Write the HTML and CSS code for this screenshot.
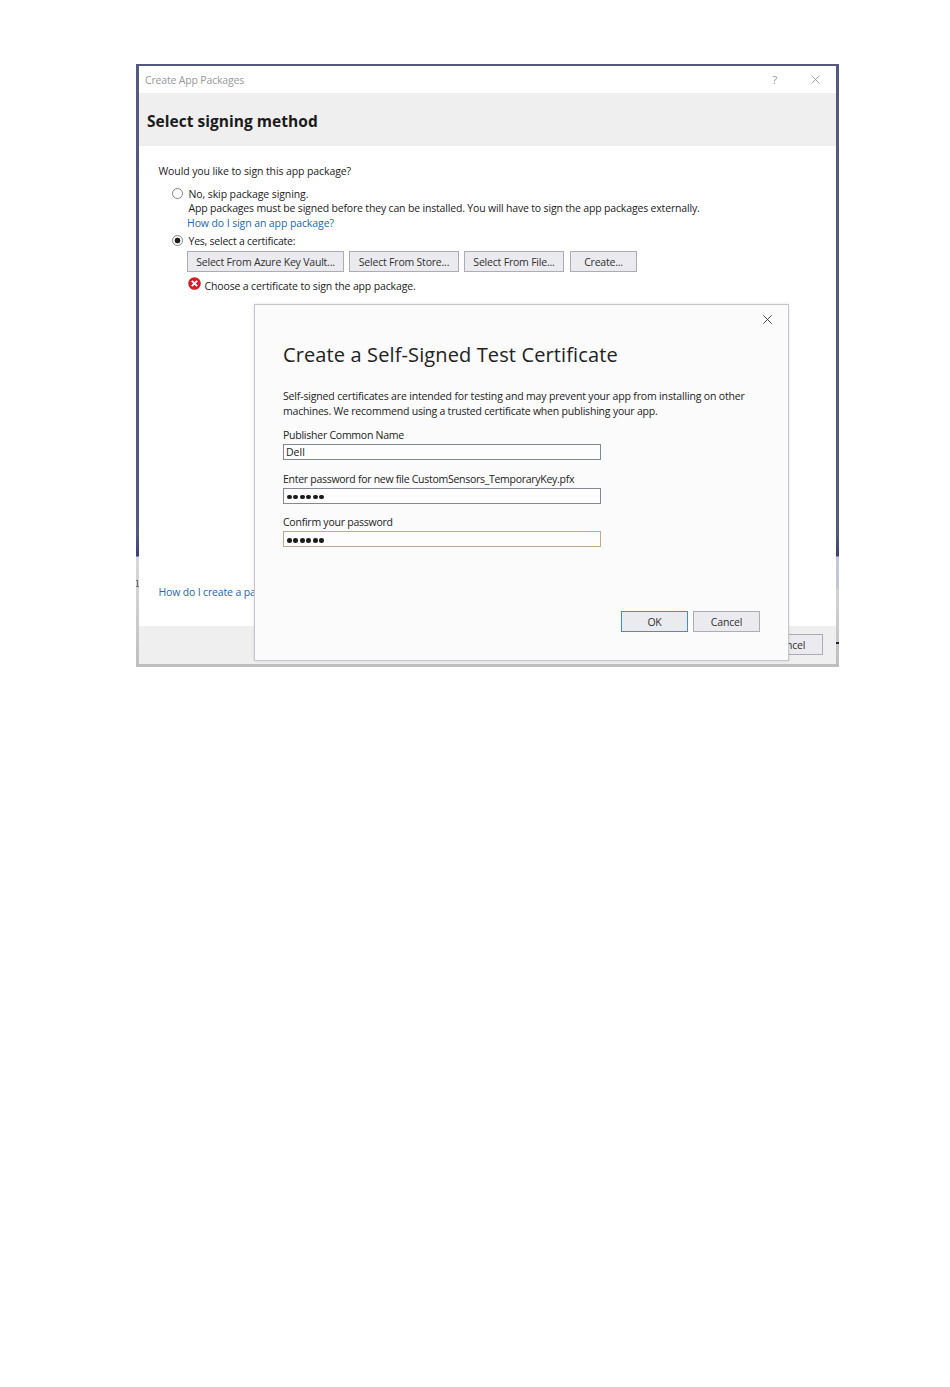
FILE: index.html
```
<!DOCTYPE html>
<html lang="en">
<head>
    <meta charset="UTF-8">
    <meta name="viewport" content="width=device-width, initial-scale=1.0">
    <title>Create App Packages</title>
    <link rel="stylesheet" href="styles.css">
</head>
<body>

    <!-- Strip of desktop visible around the window -->
    <div class="desktop">
        <div class="window">

            <div class="title-bar">
                <span class="title">Create App Packages</span>
                <span class="help">?</span>
                <svg class="close" width="9" height="9" viewBox="0 0 9 9"><path d="M0.5 0.5L8.5 8.5M8.5 0.5L0.5 8.5"/></svg>
            </div>

            <div class="header">
                <h2>Select signing method</h2>
            </div>

            <!-- Signing options -->
            <div class="content">
                <p class="question">Would you like to sign this app package?</p>

                <div class="option">
                    <span class="radio"></span>
                    <span class="skip">No, skip package signing.</span>
                </div>
                <p class="note">App packages must be signed before they can be installed. You will have to sign the app packages externally.</p>
                <a class="link sign-link">How do I sign an app package?</a>

                <div class="option option-yes">
                    <span class="radio checked"></span>
                    <span class="yes">Yes, select a certificate:</span>
                </div>

                <div class="buttons">
                    <button class="btn-vault">Select From Azure Key Vault...</button>
                    <button class="btn-store">Select From Store...</button>
                    <button class="btn-file">Select From File...</button>
                    <button class="btn-create">Create...</button>
                </div>

                <div class="error">
                    <svg width="13" height="13" viewBox="0 0 13 13">
                        <circle cx="6.5" cy="6.5" r="6.3"/>
                        <path d="M3.8 3.8L9.2 9.2M9.2 3.8L3.8 9.2"/>
                    </svg>
                    <span>Choose a certificate to sign the app package.</span>
                </div>

                <a class="link package-link">How do I create a package?</a>
            </div>

            <div class="footer">
                <button>Cancel</button>
            </div>
        </div>

        <!-- Certificate dialog -->
        <div class="dialog">
            <svg class="close" width="9" height="9" viewBox="0 0 9 9"><path d="M0.3 0.3L8.7 8.7M8.7 0.3L0.3 8.7"/></svg>
            <h1>Create a Self-Signed Test Certificate</h1>
            <p class="info"><span class="info-first">Self-signed certificates are intended for testing and may prevent your app from installing on other</span><br><span class="info-second">machines. We recommend using a trusted certificate when publishing your app.</span></p>

            <label class="label-name" for="publisher">Publisher Common Name</label>
            <input type="text" id="publisher" value="Dell">

            <label class="label-password" for="password">Enter password for new file CustomSensors_TemporaryKey.pfx</label>
            <div class="password" id="password"><i></i><i></i><i></i><i></i><i></i><i></i></div>

            <label class="label-confirm" for="confirm">Confirm your password</label>
            <div class="password focused" id="confirm"><i></i><i></i><i></i><i></i><i></i><i></i></div>

            <div class="actions">
                <button class="btn-ok">OK</button>
                <button>Cancel</button>
            </div>
        </div>
    </div>

</body>
</html>
```
FILE: styles.css
```
/* General styles */
* {
    box-sizing: border-box;
}

body {
    margin: 0;
    padding: 64px 0 0 136px;
    background-color: #fff;
    color: #222;
    font-family: "Open Sans", "Noto Sans", sans-serif;
    font-size: 10.5px;
    letter-spacing: -0.17px;
    line-height: 14px;
}

h1, h2, p {
    margin: 0;
}

span, p, a, label, h1, h2 {
    white-space: nowrap;
}

.desktop {
    position: relative;
    width: 703px;
    height: 603px;
    padding: 2px 3px 3px;
    background:
        linear-gradient(#1f1f55, #1f1f55) right 578px / 3px 2px no-repeat,
        linear-gradient(#7a6f68, #7a6f68) left 516px / 2px 1px no-repeat,
        linear-gradient(#7a6f68, #7a6f68) 1px 516px / 1px 6px no-repeat,
        linear-gradient(#7a6f68, #7a6f68) left 522px / 3px 1px no-repeat,
        linear-gradient(#c3c6e2, #c3c6d6) right 493px / 3px 32px no-repeat,
        linear-gradient(#54597f 0, #54597f 470px, #3d3f78 492px, #d6d6dc 493px, #d0d0d0 540px, #bebebe 100%);
}

.window {
    display: flex;
    flex-direction: column;
    width: 697px;
    height: 598px;
    background-color: #fff;
}

/* Title bar */
.title-bar {
    display: flex;
    align-items: center;
    height: 27px;
    padding: 0 16px 0 6px;
    color: #999;
}

.title {
    flex: 1;
}

.help {
    margin-right: 34px;
    font-size: 11.5px;
}

.close {
    fill: none;
    stroke: #999;
    stroke-width: 0.9;
}

.header {
    height: 53px;
    padding: 18px 8px 0;
    background-color: #efefef;
}

h2 {
    font-size: 15.5px;
    font-weight: 700;
    letter-spacing: 0.03px;
    line-height: 20px;
    color: #1b1b1b;
}

/* Signing options */
.content {
    flex: 1;
    display: flex;
    flex-direction: column;
    align-items: flex-start;
    padding: 18px 0 0 19.5px;
}

.question, .skip, .link {
    letter-spacing: -0.1px;
}

.option {
    display: flex;
    align-items: flex-start;
    gap: 5.5px;
    margin: 9px 0 0 13.5px;
}

.option-yes {
    margin-top: 4px;
}

.yes {
    letter-spacing: -0.23px;
}

.radio {
    width: 11px;
    height: 11px;
    margin-top: 1px;
    border: 1px solid #858585;
    border-radius: 50%;
    background-color: #fff;
}

.radio.checked {
    background: radial-gradient(circle, #1e1e1e 2.6px, #fff 3.2px);
}

.note {
    margin-left: 30px;
    line-height: 15px;
}

.link {
    color: #2467b3;
}

.sign-link {
    margin-left: 28.5px;
}

button {
    width: 67px;
    height: 21px;
    padding: 0;
    border: 1px solid #acacb4;
    background-color: #ebebef;
    color: #303030;
    font: inherit;
    letter-spacing: -0.2px;
    white-space: nowrap;
}

.buttons {
    display: flex;
    gap: 5px;
    margin: 3px 0 0 28.5px;
}

.btn-vault {
    width: 157px;
}

.btn-store {
    width: 110px;
}

.btn-file {
    width: 100px;
    margin-right: 1px;
}

.btn-ok {
    border-color: #3393df;
}

.error {
    display: flex;
    gap: 4px;
    margin: 5px 0 0 29px;
    letter-spacing: -0.14px;
}

.error span {
    margin-top: 2px;
}

.error circle {
    fill: #d01f26;
}

.error path {
    fill: none;
    stroke: #fff;
    stroke-width: 1.9;
}

.package-link {
    margin-top: auto;
    margin-bottom: 27px;
    letter-spacing: -0.16px;
}

.footer {
    display: flex;
    justify-content: flex-end;
    height: 38px;
    padding: 8px 13px 0 0;
    background-color: #efefef;
}

/* Certificate dialog */
.dialog {
    position: absolute;
    left: 118px;
    top: 240px;
    display: flex;
    flex-direction: column;
    align-items: flex-start;
    width: 535px;
    height: 357px;
    padding: 10px 28px 28px;
    border: 1px solid #c6c6ce;
    background-color: #fbfbfb;
    box-shadow: 0 0 3px rgba(0, 0, 0, 0.12);
}

.dialog .close {
    align-self: flex-end;
    margin-right: -12px;
    stroke: #333;
}

h1 {
    margin-top: 17px;
    font-size: 20px;
    font-weight: 400;
    letter-spacing: 0.12px;
    line-height: 28px;
}

.info {
    margin: 20px 0 10px;
    line-height: 14.5px;
}

.info-first {
    letter-spacing: -0.16px;
}

.info-second {
    letter-spacing: -0.2px;
}

.label-name, .label-confirm {
    letter-spacing: -0.24px;
}

.label-password {
    letter-spacing: -0.28px;
}

input, .password {
    width: 318px;
    height: 16px;
    margin: 2px 0 11.6px;
    padding: 0 2px;
    border: 1px solid #858997;
    background-color: #fdfdfd;
    color: #222;
    font: inherit;
}

.password {
    display: flex;
    gap: 1.9px;
    padding: 6px 3px 0;
}

.password i {
    width: 4.6px;
    height: 4.6px;
    border-radius: 50%;
    background-color: #1b1b1b;
}

.password.focused {
    border-color: #c2a98c;
}

.actions {
    display: flex;
    gap: 5px;
    margin-top: auto;
    margin-left: auto;
}
```
